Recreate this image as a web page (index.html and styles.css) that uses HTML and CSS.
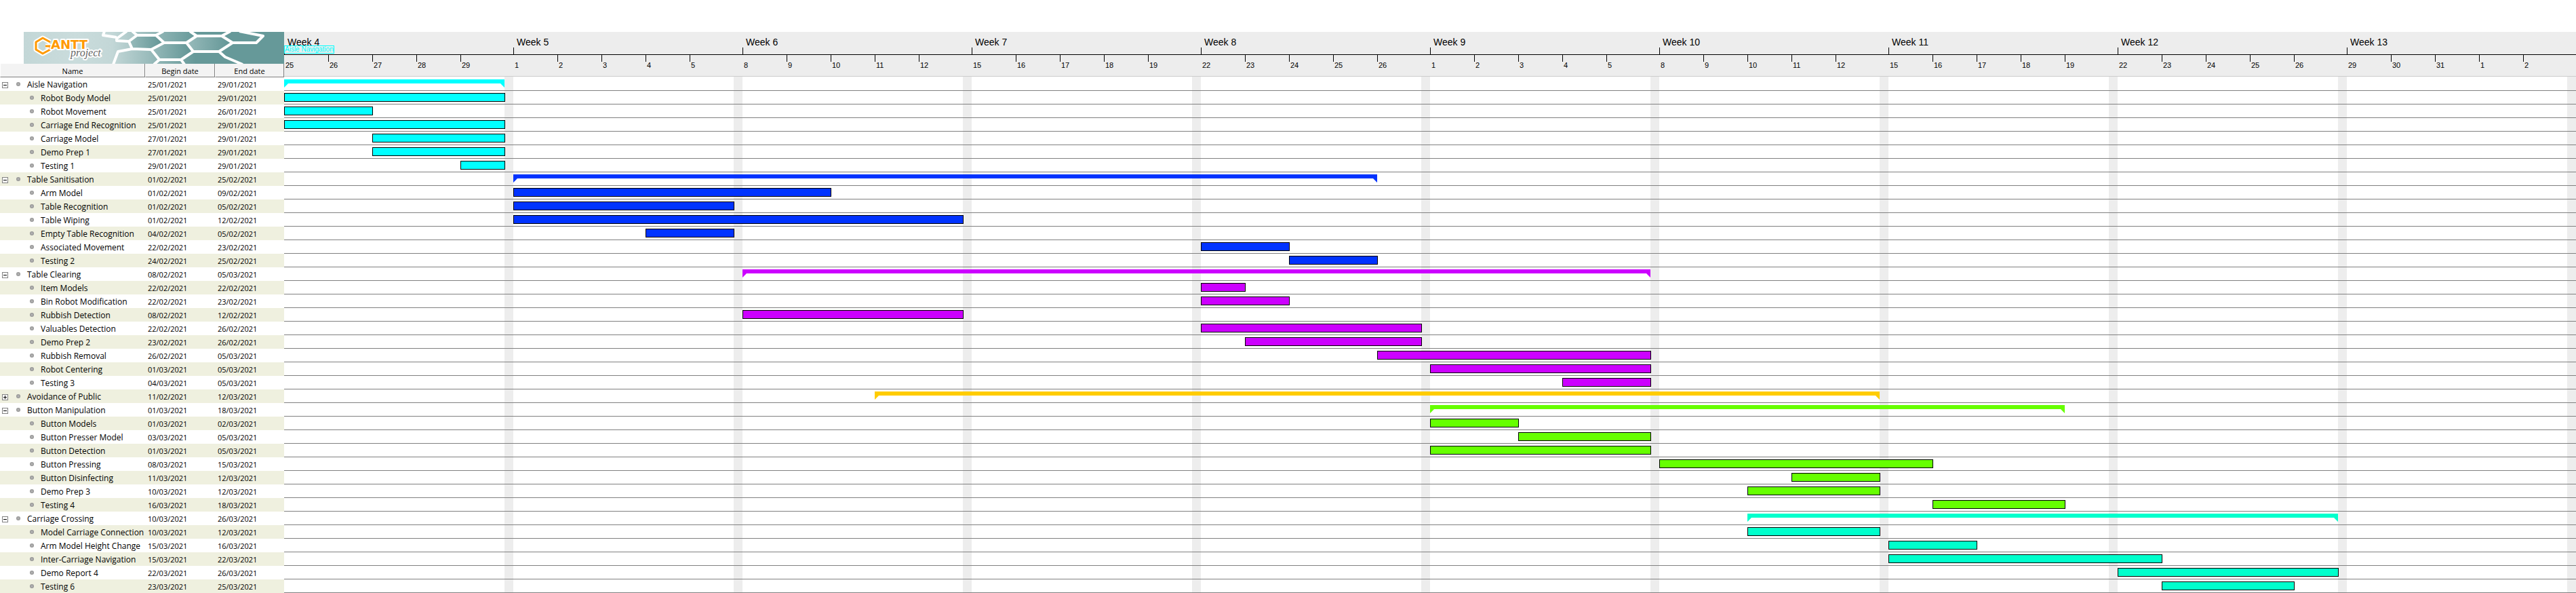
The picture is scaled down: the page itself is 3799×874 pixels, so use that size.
FILE: index.html
```html
<!DOCTYPE html>
<html lang="en">
<head>
<meta charset="utf-8">
<title>GanttProject</title>
<link rel="stylesheet" href="styles.css">
</head>
<body>
<main class="app">
<section class="tasks">
<svg class="logo" viewBox="0 0 384 47" role="img" aria-label="GanttProject">
<defs><linearGradient id="sea" x1="0" x2="1" y1="0" y2="0"><stop offset="0" stop-color="#c3d7d7"/><stop offset=".2" stop-color="#cadcdc"/><stop offset=".34" stop-color="#c3d7d7"/><stop offset=".66" stop-color="#669999"/><stop offset="1" stop-color="#669999"/></linearGradient>
<linearGradient id="cell" x1="0" x2="1" y1="0" y2="0"><stop offset="0" stop-color="#98bbbb"/><stop offset="1" stop-color="#609494"/></linearGradient></defs>
<rect width="384" height="47" fill="url(#sea)"/>
<g fill="url(#cell)"><path d="M155 14L167 5H195L207 16L188 26H160Z"/><path d="M188 26L207 16H240L250 29L232 41H200Z"/><path d="M240 16L255 6H292L308 16L288 29H250Z"/></g>
<path fill="none" stroke="#fff" stroke-width="4" stroke-linejoin="round" d="M119 -1L117 5L137 8M152 -1L137 10V13L155 14L167 5H195L207 16L188 26L160 25L155 14M160 -1L167 5M195 5L206 -1M207 16H240L250 29L232 41H200L188 26M240 16L255 6H292L308 16L288 29H250M255 6L245 -1M292 6L305 -1M308 16L343 16L353 6L318 -1M288 29L297 37L323 48M232 41L237 48M200 41L192 48M160 25L139 29L132 48"/>
<g stroke="#fff" stroke-width="4" stroke-linejoin="round" paint-order="stroke">
<path d="M39 15L28 9L18 15V26L28 32L39 26V21H32" fill="none" stroke-width="7"/>
<path d="M39 15L28 9L18 15V26L28 32L39 26V21H32" fill="none" stroke="#ff9900" stroke-width="3"/>
<text class="brand" x="40" y="25">ANTT</text>
<text class="brand-sub" x="69" y="36">project</text>
</g>
</svg>
<table class="task-table">
<colgroup><col class="col-name"><col class="col-begin"><col class="col-end"></colgroup>
<thead><tr><th scope="col">Name</th><th scope="col">Begin date</th><th scope="col">End date</th></tr></thead>
<tbody>
<tr class="group"><td><button class="toggle" aria-label="Collapse"></button><i class="dot"></i>Aisle Navigation</td><td>25/01/2021</td><td>29/01/2021</td></tr>
<tr><td><i class="dot"></i>Robot Body Model</td><td>25/01/2021</td><td>29/01/2021</td></tr>
<tr><td><i class="dot"></i>Robot Movement</td><td>25/01/2021</td><td>26/01/2021</td></tr>
<tr><td><i class="dot"></i>Carriage End Recognition</td><td>25/01/2021</td><td>29/01/2021</td></tr>
<tr><td><i class="dot"></i>Carriage Model</td><td>27/01/2021</td><td>29/01/2021</td></tr>
<tr><td><i class="dot"></i>Demo Prep 1</td><td>27/01/2021</td><td>29/01/2021</td></tr>
<tr><td><i class="dot"></i>Testing 1</td><td>29/01/2021</td><td>29/01/2021</td></tr>
<tr class="group"><td><button class="toggle" aria-label="Collapse"></button><i class="dot"></i>Table Sanitisation</td><td>01/02/2021</td><td>25/02/2021</td></tr>
<tr><td><i class="dot"></i>Arm Model</td><td>01/02/2021</td><td>09/02/2021</td></tr>
<tr><td><i class="dot"></i>Table Recognition</td><td>01/02/2021</td><td>05/02/2021</td></tr>
<tr><td><i class="dot"></i>Table Wiping</td><td>01/02/2021</td><td>12/02/2021</td></tr>
<tr><td><i class="dot"></i>Empty Table Recognition</td><td>04/02/2021</td><td>05/02/2021</td></tr>
<tr><td><i class="dot"></i>Associated Movement</td><td>22/02/2021</td><td>23/02/2021</td></tr>
<tr><td><i class="dot"></i>Testing 2</td><td>24/02/2021</td><td>25/02/2021</td></tr>
<tr class="group"><td><button class="toggle" aria-label="Collapse"></button><i class="dot"></i>Table Clearing</td><td>08/02/2021</td><td>05/03/2021</td></tr>
<tr><td><i class="dot"></i>Item Models</td><td>22/02/2021</td><td>22/02/2021</td></tr>
<tr><td><i class="dot"></i>Bin Robot Modification</td><td>22/02/2021</td><td>23/02/2021</td></tr>
<tr><td><i class="dot"></i>Rubbish Detection</td><td>08/02/2021</td><td>12/02/2021</td></tr>
<tr><td><i class="dot"></i>Valuables Detection</td><td>22/02/2021</td><td>26/02/2021</td></tr>
<tr><td><i class="dot"></i>Demo Prep 2</td><td>23/02/2021</td><td>26/02/2021</td></tr>
<tr><td><i class="dot"></i>Rubbish Removal</td><td>26/02/2021</td><td>05/03/2021</td></tr>
<tr><td><i class="dot"></i>Robot Centering</td><td>01/03/2021</td><td>05/03/2021</td></tr>
<tr><td><i class="dot"></i>Testing 3</td><td>04/03/2021</td><td>05/03/2021</td></tr>
<tr class="group"><td><button class="toggle closed" aria-label="Expand"></button><i class="dot"></i>Avoidance of Public</td><td>11/02/2021</td><td>12/03/2021</td></tr>
<tr class="group"><td><button class="toggle" aria-label="Collapse"></button><i class="dot"></i>Button Manipulation</td><td>01/03/2021</td><td>18/03/2021</td></tr>
<tr><td><i class="dot"></i>Button Models</td><td>01/03/2021</td><td>02/03/2021</td></tr>
<tr><td><i class="dot"></i>Button Presser Model</td><td>03/03/2021</td><td>05/03/2021</td></tr>
<tr><td><i class="dot"></i>Button Detection</td><td>01/03/2021</td><td>05/03/2021</td></tr>
<tr><td><i class="dot"></i>Button Pressing</td><td>08/03/2021</td><td>15/03/2021</td></tr>
<tr><td><i class="dot"></i>Button Disinfecting</td><td>11/03/2021</td><td>12/03/2021</td></tr>
<tr><td><i class="dot"></i>Demo Prep 3</td><td>10/03/2021</td><td>12/03/2021</td></tr>
<tr><td><i class="dot"></i>Testing 4</td><td>16/03/2021</td><td>18/03/2021</td></tr>
<tr class="group"><td><button class="toggle" aria-label="Collapse"></button><i class="dot"></i>Carriage Crossing</td><td>10/03/2021</td><td>26/03/2021</td></tr>
<tr><td><i class="dot"></i>Model Carriage Connection</td><td>10/03/2021</td><td>12/03/2021</td></tr>
<tr><td><i class="dot"></i>Arm Model Height Change</td><td>15/03/2021</td><td>16/03/2021</td></tr>
<tr><td><i class="dot"></i>Inter-Carriage Navigation</td><td>15/03/2021</td><td>22/03/2021</td></tr>
<tr><td><i class="dot"></i>Demo Report 4</td><td>22/03/2021</td><td>26/03/2021</td></tr>
<tr><td><i class="dot"></i>Testing 6</td><td>23/03/2021</td><td>25/03/2021</td></tr>
</tbody>
</table>
</section>
<section class="chart">
<header class="timeline">
<div class="weeks"><span>Week 4</span><span>Week 5</span><span>Week 6</span><span>Week 7</span><span>Week 8</span><span>Week 9</span><span>Week 10</span><span>Week 11</span><span>Week 12</span><span>Week 13</span></div>
<div class="days">
<div class="week"><span>25</span><span>26</span><span>27</span><span>28</span><span>29</span></div>
<div class="week"><span>1</span><span>2</span><span>3</span><span>4</span><span>5</span></div>
<div class="week"><span>8</span><span>9</span><span>10</span><span>11</span><span>12</span></div>
<div class="week"><span>15</span><span>16</span><span>17</span><span>18</span><span>19</span></div>
<div class="week"><span>22</span><span>23</span><span>24</span><span>25</span><span>26</span></div>
<div class="week"><span>1</span><span>2</span><span>3</span><span>4</span><span>5</span></div>
<div class="week"><span>8</span><span>9</span><span>10</span><span>11</span><span>12</span></div>
<div class="week"><span>15</span><span>16</span><span>17</span><span>18</span><span>19</span></div>
<div class="week"><span>22</span><span>23</span><span>24</span><span>25</span><span>26</span></div>
<div class="week"><span>29</span><span>30</span><span>31</span><span>1</span><span>2</span></div>
</div>
<span class="marker">Aisle Navigation</span>
</header>
<div class="rows">
<div class="lane aisle"><b class="summary" style="grid-column:1/26"></b></div>
<div class="lane aisle"><b class="bar" style="grid-column:1/26"></b></div>
<div class="lane aisle"><b class="bar" style="grid-column:1/11"></b></div>
<div class="lane aisle"><b class="bar" style="grid-column:1/26"></b></div>
<div class="lane aisle"><b class="bar" style="grid-column:11/26"></b></div>
<div class="lane aisle"><b class="bar" style="grid-column:11/26"></b></div>
<div class="lane aisle"><b class="bar" style="grid-column:21/26"></b></div>
<div class="lane sanitise"><b class="summary" style="grid-column:27/125"></b></div>
<div class="lane sanitise"><b class="bar" style="grid-column:27/63"></b></div>
<div class="lane sanitise"><b class="bar" style="grid-column:27/52"></b></div>
<div class="lane sanitise"><b class="bar" style="grid-column:27/78"></b></div>
<div class="lane sanitise"><b class="bar" style="grid-column:42/52"></b></div>
<div class="lane sanitise"><b class="bar" style="grid-column:105/115"></b></div>
<div class="lane sanitise"><b class="bar" style="grid-column:115/125"></b></div>
<div class="lane clearing"><b class="summary" style="grid-column:53/156"></b></div>
<div class="lane clearing"><b class="bar" style="grid-column:105/110"></b></div>
<div class="lane clearing"><b class="bar" style="grid-column:105/115"></b></div>
<div class="lane clearing"><b class="bar" style="grid-column:53/78"></b></div>
<div class="lane clearing"><b class="bar" style="grid-column:105/130"></b></div>
<div class="lane clearing"><b class="bar" style="grid-column:110/130"></b></div>
<div class="lane clearing"><b class="bar" style="grid-column:125/156"></b></div>
<div class="lane clearing"><b class="bar" style="grid-column:131/156"></b></div>
<div class="lane clearing"><b class="bar" style="grid-column:146/156"></b></div>
<div class="lane avoidance"><b class="summary" style="grid-column:68/182"></b></div>
<div class="lane button"><b class="summary" style="grid-column:131/203"></b></div>
<div class="lane button"><b class="bar" style="grid-column:131/141"></b></div>
<div class="lane button"><b class="bar" style="grid-column:141/156"></b></div>
<div class="lane button"><b class="bar" style="grid-column:131/156"></b></div>
<div class="lane button"><b class="bar" style="grid-column:157/188"></b></div>
<div class="lane button"><b class="bar" style="grid-column:172/182"></b></div>
<div class="lane button"><b class="bar" style="grid-column:167/182"></b></div>
<div class="lane button"><b class="bar" style="grid-column:188/203"></b></div>
<div class="lane crossing"><b class="summary" style="grid-column:167/234"></b></div>
<div class="lane crossing"><b class="bar" style="grid-column:167/182"></b></div>
<div class="lane crossing"><b class="bar" style="grid-column:183/193"></b></div>
<div class="lane crossing"><b class="bar" style="grid-column:183/214"></b></div>
<div class="lane crossing"><b class="bar" style="grid-column:209/234"></b></div>
<div class="lane crossing"><b class="bar" style="grid-column:214/229"></b></div>
</div>
</section>
</main>
</body>
</html>
```
FILE: styles.css
```css
* { box-sizing: border-box; }
body {
  margin: 0;
  background: #fff;
  color: #000;
  font: 12px/16px "Open Sans", "Noto Sans", sans-serif;
}
.app { display: flex; padding-top: 47px; }

/* Task table */
.tasks { flex: 0 0 419px; }
.logo { display: block; width: 384px; height: 47px; margin-left: 35px; }
.brand { font: bold 18px "DejaVu Sans", sans-serif; fill: #ff9900; }
.brand-sub { font: italic 16px "Liberation Serif", serif; fill: #666; }
.task-table {
  width: 100%;
  border-collapse: separate;
  border-spacing: 0;
  table-layout: fixed;
}
.col-name { width: 214px; }
.col-begin { width: 103px; }
.col-end { width: 102px; }
th {
  height: 20px;
  padding: 2px 0 0;
  font-size: 11px;
  font-weight: normal;
  background: #f3f3f3;
  border-right: 1px solid #808080;
  border-bottom: 1px solid #808080;
  border-left: 1px solid #fff;
}
td {
  height: 20px;
  padding: 2px 0 0 4px;
  font-size: 11px;
  white-space: nowrap;
}
td:first-child { padding-left: 44px; font-size: 12px; }
.group td:first-child { padding-left: 3px; }
tbody tr:nth-child(even) { background: #eff0df; }
.dot {
  display: inline-block;
  width: 6px;
  height: 6px;
  margin-right: 10px;
  border-radius: 50%;
  background: radial-gradient(#bbb, #808080);
  vertical-align: 2px;
}
.toggle {
  width: 9px;
  height: 9px;
  margin: 0 12px 0 0;
  padding: 0;
  border: 1px solid #808080;
  background: linear-gradient(#000, #000) center / 5px 1px no-repeat #fff;
  vertical-align: 0;
}
.toggle.closed {
  background:
    linear-gradient(#000, #000) center / 5px 1px no-repeat,
    linear-gradient(#000, #000) center / 1px 5px no-repeat,
    #fff;
}

/* Timeline */
.chart { flex: 1; min-width: 0; }
.timeline {
  position: relative;
  background: #ededed;
  border-bottom: 1px solid #ccc;
  font-family: "Liberation Sans", Arial, sans-serif;
}
.weeks, .days { display: grid; grid-template-columns: repeat(10, 1fr); }
.weeks {
  height: 34px;
  border-bottom: 1px solid #000;
  font-size: 14px;
}
.weeks span {
  padding: 7px 0 0 5px;
  background: linear-gradient(#000, #000) left bottom / 1px 10px no-repeat;
}
.days { height: 31px; font-size: 11px; line-height: 12px; }
.week { display: grid; grid-template-columns: repeat(5, 5fr) 1fr; }
.week span { padding: 9px 0 0 2px; }
.week span + span { background: linear-gradient(#000, #000) left top / 1px 10px no-repeat; }
.marker {
  position: absolute;
  top: 20px;
  left: 0;
  border: 1px solid #0ff;
  background: #ededed;
  color: #0ff;
  font-size: 10px;
  line-height: 10px;
}

/* Chart lanes: 10 weeks of 26 units, five per working day and one per weekend */
.rows {
  padding-top: 1px;
  background: linear-gradient(to left, #ededed calc(100% / 26), transparent 0) left top / 10% 100%;
}
.lane {
  display: grid;
  grid-template-columns: repeat(260, 1fr);
  align-items: start;
  height: 20px;
  padding-top: 3px;
  border-bottom: 1px solid #808080;
}
.bar {
  height: 13px;
  margin-right: -1px;
  border: 1px solid #000;
  background: var(--tint);
}
.summary {
  height: 12px;
  background: var(--tint);
  clip-path: polygon(0 0, 100% 0, 100% 100%, calc(100% - 6px) 6px, 6px 6px, 0 100%);
}
.aisle { --tint: #00ffff; }
.sanitise { --tint: #0033ff; }
.clearing { --tint: #cc00ff; }
.avoidance { --tint: #ffcc00; }
.button { --tint: #66ff00; }
.crossing { --tint: #00ffcc; }
```
